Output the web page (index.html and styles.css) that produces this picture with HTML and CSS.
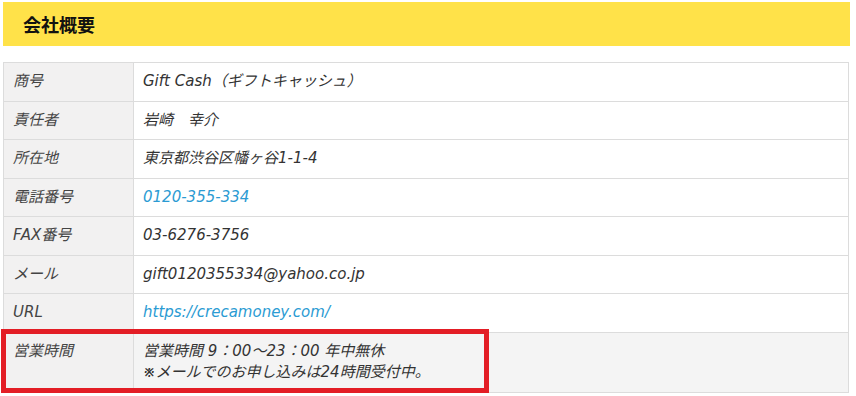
FILE: index.html
```html
<!DOCTYPE html>
<html lang="ja">
<head>
<meta charset="utf-8">
<title>会社概要</title>
<link rel="stylesheet" href="styles.css">
</head>
<body>
<div class="page">
  <h2 class="heading">会社概要</h2>
  <div class="table-wrap">
    <table class="info">
      <tr><th>商号</th><td>Gift Cash（ギフトキャッシュ）</td></tr>
      <tr><th>責任者</th><td>岩崎　幸介</td></tr>
      <tr><th>所在地</th><td>東京都渋谷区幡ヶ谷1-1-4</td></tr>
      <tr><th>電話番号</th><td><a class="link" href="#">0120-355-334</a></td></tr>
      <tr><th>FAX番号</th><td>03-6276-3756</td></tr>
      <tr><th>メール</th><td>gift0120355334@yahoo.co.jp</td></tr>
      <tr><th>URL</th><td><a class="link" href="#">https://crecamoney.com/</a></td></tr>
      <tr class="last"><th>営業時間</th><td>営業時間 9：00～23：00 年中無休<br>※メールでのお申し込みは24時間受付中。</td></tr>
    </table>
    <div class="highlight"></div>
  </div>
</div>
</body>
</html>
```
FILE: styles.css
```css
html, body {
  margin: 0;
  padding: 0;
  background: #ffffff;
}
.page {
  padding: 2px 6px 0 3px;
  font-family: "DejaVu Sans", "Noto Sans CJK JP", sans-serif;
}
.heading {
  margin: 0;
  height: 44px;
  line-height: 44px;
  padding-left: 20px;
  background: #ffe249;
  color: #111;
  font-family: "Noto Sans CJK JP", sans-serif;
  font-size: 18px;
  font-weight: 700;
}
.table-wrap {
  position: relative;
  margin-top: 16px;
  width: 846px;
}
.info {
  width: 100%;
  border-collapse: collapse;
  font-size: 15px;
  font-style: italic;
  color: #333;
}
.info th,
.info td {
  border: 1px solid #dcdcdc;
  padding: 8px 9px;
  line-height: 21.5px;
  height: 21.5px;
  text-align: left;
  vertical-align: top;
  font-weight: normal;
}
.info th {
  width: 111px;
  background: #f2f1f1;
  color: #444;
}
.info td {
  background: #fff;
}
.info .last td {
  background: #f4f4f4;
}
.link {
  color: #2b9bd3;
  text-decoration: none;
}
.highlight {
  position: absolute;
  left: -2px;
  top: 267px;
  width: 478px;
  height: 54px;
  border: 5px solid #e31d25;
}
```
